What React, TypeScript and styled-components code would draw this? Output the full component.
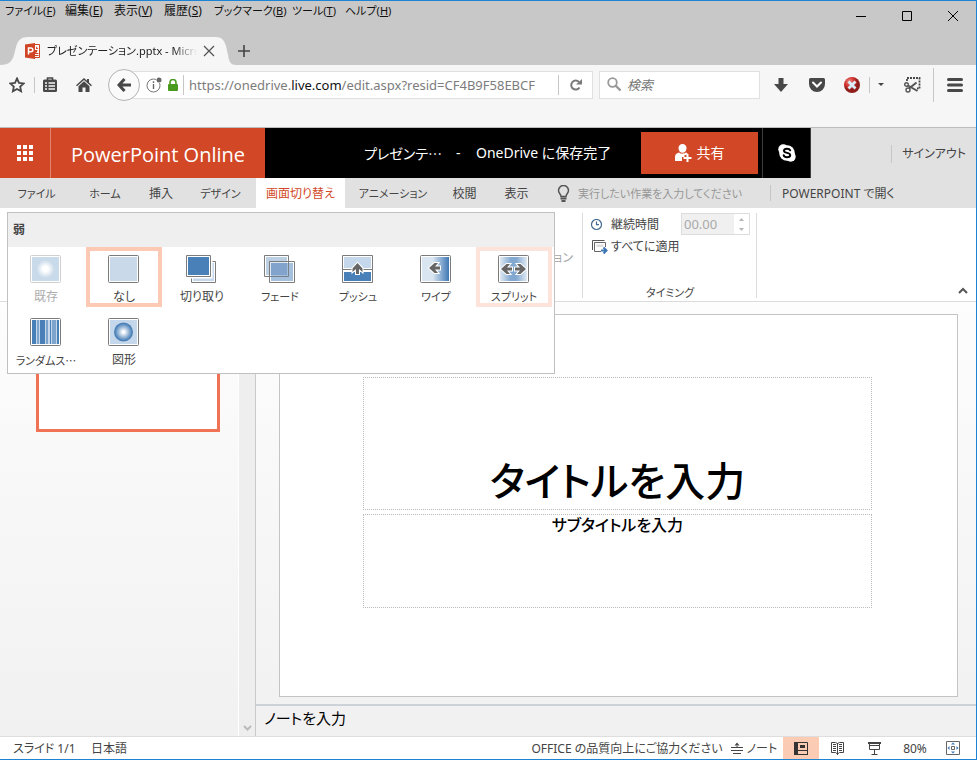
import React from "react";
import styled, { createGlobalStyle } from "styled-components";

const GlobalStyle = createGlobalStyle`
  *, *::before, *::after { box-sizing: border-box; }
  body {
    margin: 0;
    font-family: "Noto Sans", "Noto Sans CJK JP", sans-serif;
    font-feature-settings: "palt";
    font-size: 12px;
    line-height: 16px;
    color: #444;
  }
  button, input {
    font: inherit;
    font-feature-settings: inherit;
    color: inherit;
    margin: 0;
    padding: 0;
    border: 0;
    background: none;
    white-space: nowrap;
  }
  a { color: inherit; text-decoration: none; }
  svg { display: block; flex: none; }
`;

/* ---------- window ---------- */

const Window = styled.div`
  min-height: 100vh;
  display: flex;
  flex-direction: column;
  border: solid #1e83d3;
  border-width: 1px 1px 1px 0;
  background: #fff;
  overflow: hidden;
`;

const TitleArea = styled.header`
  display: flex;
  justify-content: space-between;
  height: 64px;
  background: #c8c8c8;
`;

const TitleLeft = styled.div`
  display: flex;
  flex-direction: column;
  justify-content: space-between;
`;

const MenuBar = styled.nav`
  display: grid;
  grid-template-columns: 60px 49px 50px 50px 78px 53px 60px;
  padding: 2px 0 0 5px;
  color: #111;
`;

const MenuButton = styled.button<{ $kana?: boolean }>`
  text-align: left;
  font-size: ${(p) => (p.$kana ? 11 : 12)}px;
  line-height: 16px;
`;

const TabStrip = styled.div`
  display: flex;
  align-items: center;
  height: 28px;
`;

const BrowserTab = styled.div`
  position: relative;
  display: flex;
  align-items: center;
  width: 236px;
  height: 28px;
  padding-left: 25px;
  color: #222;
`;

const TabShape = styled.svg`
  position: absolute;
  inset: 0;
  z-index: 0;
`;

const TabTitle = styled.span`
  z-index: 1;
  width: 150px;
  margin-left: 6px;
  overflow: hidden;
  font-size: 11px;
  white-space: nowrap;
  mask-image: linear-gradient(90deg, #000 126px, transparent 150px);
`;

const IconButton = styled.button<{ $w?: number; $h?: number }>`
  position: relative;
  display: flex;
  align-items: center;
  justify-content: center;
  flex: none;
  width: ${(p) => p.$w ?? 36}px;
  height: ${(p) => p.$h ?? 28}px;
`;

const WindowButtons = styled.div`
  display: flex;
  height: 30px;
`;

/* ---------- navigation bar ---------- */

const NavBar = styled.div`
  display: flex;
  align-items: center;
  height: 63px;
  padding: 1px 0 24px;
  background: #f6f6f6;
  border-bottom: 1px solid #bdbdbd;
`;

const Rule = styled.span<{ $h?: number }>`
  flex: none;
  width: 1px;
  height: ${(p) => p.$h ?? 16}px;
  background: #c6c6c6;
`;

const BackButton = styled.button`
  display: flex;
  align-items: center;
  justify-content: center;
  flex: none;
  z-index: 1;
  width: 32px;
  height: 32px;
  margin: 0 -16px 0 5px;
  border: 1px solid #b4b4b4;
  border-radius: 50%;
  background: #fafafa;
`;

const AddressBar = styled.div`
  display: flex;
  align-items: center;
  flex: 1;
  min-width: 0;
  height: 28px;
  padding-left: 20px;
  border: 1px solid #e0e0e0;
  background: #fff;
`;

const Url = styled.div`
  flex: 1;
  min-width: 0;
  margin-left: 5px;
  overflow: hidden;
  font-size: 13px;
  line-height: 20px;
  white-space: nowrap;
  color: #7c7c7c;
  b { font-weight: 400; color: #111; }
`;

const SearchBox = styled.label`
  display: flex;
  align-items: center;
  flex: none;
  width: 161px;
  height: 28px;
  margin: 0 3px 0 6px;
  padding-left: 7px;
  gap: 5px;
  border: 1px solid #e0e0e0;
  background: #fff;
  input { width: 100%; font-size: 13px; font-style: italic; outline: 0; }
  input::placeholder { color: #777; opacity: 1; }
`;

/* ---------- app header ---------- */

const AppHeader = styled.div`
  display: flex;
  align-items: stretch;
  height: 50px;
  background: #e1e1e1;
`;

const Launcher = styled.button`
  display: flex;
  align-items: center;
  justify-content: center;
  width: 51px;
  background: #d24726;
  border-right: 1px solid #e28570;
`;

const Brand = styled.a`
  display: flex;
  align-items: center;
  justify-content: center;
  width: 214px;
  padding-top: 3px;
  background: #d24726;
  color: #fff;
  font-family: "Open Sans", sans-serif;
  font-size: 20px;
  line-height: 28px;
  white-space: nowrap;
`;

const DocumentBar = styled.div`
  display: flex;
  align-items: center;
  flex: 0 1 546px;
  background: #000;
  color: #fff;
  font-size: 14px;
  line-height: 20px;
  white-space: nowrap;
`;

const DocumentName = styled.span`
  width: 92px;
  margin-left: 99px;
`;

const Ellipsis = styled.span`
  font-family: "Noto Sans CJK JP", sans-serif;
`;

const Dash = styled.span`
  width: 20px;
`;

const SaveState = styled.span`
  flex: 1;
`;

const ShareButton = styled.button`
  display: flex;
  align-items: center;
  justify-content: center;
  gap: 5px;
  width: 117px;
  height: 42px;
  margin-right: 4px;
  background: #d24726;
  color: #fff;
`;

const SkypeButton = styled.button`
  display: flex;
  align-items: center;
  justify-content: center;
  align-self: stretch;
  width: 49px;
  border: solid #3c3c3c;
  border-width: 0 1px;
`;

const Account = styled.div`
  display: flex;
  align-items: center;
  justify-content: flex-end;
  flex: 1;
  gap: 10px;
  padding: 2px 10px 0 0;
  white-space: nowrap;
`;

/* ---------- ribbon ---------- */

const RibbonTabs = styled.div`
  display: flex;
  align-items: center;
  height: 30px;
  background: #e1e1e1;
  white-space: nowrap;
`;

const TabList = styled.div`
  display: grid;
  grid-template-columns: 73px 64px 48px 71px 89px 96px 47px 57px;
  height: 30px;
`;

const RibbonTab = styled.button<{ $active?: boolean; $kana?: boolean }>`
  padding-top: 2px;
  background: ${(p) => (p.$active ? "#fff" : "transparent")};
  color: ${(p) => (p.$active ? "#d24726" : "#444")};
  font-size: ${(p) => (p.$kana ? 11 : 12)}px;
`;

const TellMe = styled.label`
  display: flex;
  align-items: center;
  gap: 8px;
  width: 225px;
  padding-left: 12px;
  font-size: 11px;
  input { flex: 1; min-width: 0; padding-top: 2px; outline: 0; }
  input::placeholder { color: #979797; opacity: 1; }
`;

const OpenLink = styled.a`
  padding-top: 2px;
  margin-left: 11px;
`;

const Ribbon = styled.div`
  position: relative;
  display: flex;
  height: 94px;
  padding-top: 5px;
  border-bottom: 1px solid #dcdcdc;
  background: #fff;
`;

const EffectGroup = styled.div`
  display: flex;
  align-items: center;
  justify-content: flex-end;
  width: 583px;
  height: 85px;
  padding: 4px 9px 0 0;
  border-right: 1px solid #dcdcdc;
  color: #a6a6a6;
`;

const TimingGroup = styled.div`
  display: flex;
  flex-direction: column;
  width: 174px;
  height: 85px;
  padding: 0 6px 0 7px;
  border-right: 1px solid #dcdcdc;
`;

const TimingRow = styled.div`
  display: flex;
  align-items: center;
  height: 22px;
`;

const TimingLabel = styled.label`
  display: flex;
  align-items: center;
  gap: 8px;
  flex: 1;
  padding-top: 2px;
  white-space: nowrap;
`;

const Spinner = styled.div`
  display: flex;
  width: 69px;
  height: 22px;
  border: 1px solid #dcdcdc;
  input {
    flex: 1;
    min-width: 0;
    padding-left: 2px;
    background: #f0f0f0;
    color: #a9a9a9;
    font-size: 13px;
  }
`;

const SpinArrows = styled.div`
  display: flex;
  flex-direction: column;
  width: 15px;
`;

const ApplyAll = styled.button`
  display: flex;
  align-items: center;
  gap: 3px;
  height: 22px;
  padding: 2px 0 0 2px;
`;

const GroupName = styled.div`
  margin-top: auto;
  text-align: center;
  font-size: 11px;
  line-height: 10px;
`;

const Collapse = styled.button`
  align-self: flex-end;
  margin: 0 8px 7px auto;
`;

/* ---------- transition gallery ---------- */

const Gallery = styled.section`
  position: absolute;
  z-index: 5;
  top: 4px;
  left: 7px;
  width: 548px;
  height: 162px;
  border: 1px solid #c0c0c0;
  background: #fff;
`;

const GalleryTitle = styled.h2`
  margin: 0;
  padding: 0 5px;
  background: #efefef;
  font-size: 12px;
  line-height: 34px;
`;

const GalleryGrid = styled.div`
  display: grid;
  grid-template-columns: repeat(7, 76px);
  gap: 3px 2px;
`;

const Effect = styled.button<{ $mark?: string; $off?: boolean; $kana?: boolean }>`
  display: flex;
  flex-direction: column;
  align-items: center;
  gap: 6px;
  height: 60px;
  padding-top: 4px;
  border: 4px solid ${(p) => p.$mark ?? "transparent"};
  color: ${(p) => (p.$off ? "#adadad" : "#444")};
  font-size: ${(p) => (p.$kana ? 11 : 12)}px;
  line-height: 16px;
`;

/* ---------- workspace ---------- */

const Workspace = styled.main`
  display: flex;
  flex: 1;
  min-height: 434px;
  background: linear-gradient(#fdfdfd, #f1f1f1);
`;

const SlidePanel = styled.aside`
  display: flex;
  justify-content: space-between;
  width: 256px;
  padding-left: 36px;
  border-right: 1px solid #c9c9c9;
`;

const Thumbnail = styled.button`
  width: 184px;
  height: 106px;
  margin-top: 24px;
  border: 3px solid #f07355;
  background: #fff;
`;

const PanelScroll = styled.div`
  display: flex;
  align-items: flex-end;
  justify-content: center;
  width: 17px;
  padding-bottom: 4px;
  border-left: 1px solid #fff;
  background: #eee;
`;

const Stage = styled.div`
  display: flex;
  flex-direction: column;
  flex: 1;
  min-width: 0;
`;

const Slide = styled.article`
  display: flex;
  flex-direction: column;
  flex: 1;
  gap: 4px;
  margin: 12px 18px 7px 23px;
  padding: 62px 85px 88px 83px;
  border: 1px solid #c4c4c4;
  background: #fff;
  color: #000;
  text-align: center;
`;

const TitleBox = styled.div`
  display: flex;
  align-items: flex-end;
  justify-content: center;
  flex: 132;
  padding-bottom: 5px;
  border: 1px dotted #bcbcbc;
  font-size: 40px;
  font-weight: 500;
  line-height: 46px;
`;

const SubtitleBox = styled.div`
  flex: 96;
  border: 1px dotted #bcbcbc;
  font-size: 16px;
  font-weight: 500;
  line-height: 20px;
`;

const Notes = styled.div`
  height: 32px;
  padding: 2px 8px;
  border-top: 2px solid #ccd2d7;
  background: #f1f1f1;
  color: #000;
  font-size: 15px;
  line-height: 20px;
`;

/* ---------- status bar ---------- */

const StatusBar = styled.footer`
  display: flex;
  align-items: stretch;
  justify-content: space-between;
  height: 23px;
  padding: 0 7px 0 13px;
  border-top: 1px solid #dedede;
  background: #fff;
  line-height: 22px;
  white-space: nowrap;
`;

const StatusSide = styled.div`
  display: flex;
  align-items: center;
`;

const StatusText = styled.span<{ $w: number }>`
  width: ${(p) => p.$w}px;
  padding-top: 2px;
`;

const StatusButton = styled.button<{ $w: number; $active?: boolean }>`
  display: flex;
  align-items: center;
  justify-content: center;
  gap: 4px;
  width: ${(p) => p.$w}px;
  height: 22px;
  background: ${(p) => (p.$active ? "#fbcbb4" : "transparent")};
`;

const StatusLabel = styled.span`
  padding-top: 2px;
`;

/* ---------- drawings ---------- */

const Svg = (p: { w: number; h: number; children: React.ReactNode }) => (
  <svg width={p.w} height={p.h} viewBox={`0 0 ${p.w} ${p.h}`} fill="none" aria-hidden="true">
    {p.children}
  </svg>
);

const PptLogo = styled.svg`
  z-index: 1;
`;

const Frame = ({ light = false }) => (
  <rect x="0.5" y="0.5" width="30" height="27" rx="1" fill="#fff" stroke={light ? "#d0d0d0" : "#7b7b7b"} />
);

const LeftArrow = () => (
  <path
    d="M0 5 5.500 0H9L6 3.500h5v3H6L9 10H5.500z"
    fill="#666"
    stroke="#fff"
    strokeWidth="2"
    paintOrder="stroke"
  />
);

const effectArt: Record<string, React.ReactNode> = {
  current: (
    <>
      <Frame light />
      <rect x="2" y="2" width="27" height="24" fill="#c9daea" />
      <circle cx="15.500" cy="14" r="9" fill="url(#glow)" />
    </>
  ),
  none: (
    <>
      <Frame />
      <rect x="2" y="2" width="27" height="24" fill="#c9d9ea" />
    </>
  ),
  cut: (
    <>
      <path d="M5.500 6.500h24v21h-24z" fill="#fff" stroke="#7b7b7b" />
      <path d="M7 8h21v18H7z" fill="#c5d7ea" />
      <path d="M-.5-.5h27v24h-27z" fill="#fff" />
      <path d="M.5.5h24v21H.5z" fill="#fff" stroke="#7b7b7b" />
      <path d="M2 2h21v18H2z" fill="#4a80b8" />
    </>
  ),
  fade: (
    <>
      <path d="M.5.5h24v21H.5z" fill="#fff" stroke="#7b7b7b" />
      <path d="M2 2h21v18H2z" fill="#bdd0e3" />
      <path d="M5.500 6.500h25v21h-25z" fill="#fff" fillOpacity=".5" stroke="#7b7b7b" />
      <path d="M7 8h22v18H7z" fill="#8fb0d5" fillOpacity=".8" />
      <path d="M24.500 6.500v15h-19" stroke="#777f8a" />
      <path d="M7 8h16v12H7z" fill="#81a3cc" />
    </>
  ),
  push: (
    <>
      <path d="M.5.5h30v27H.5z" fill="#fff" stroke="#7b7b7b" />
      <path d="M2 2h27v11H2z" fill="#c5d7ea" />
      <path d="M2 17h27v9H2z" fill="#4a80b8" />
      <path d="M0 14.500h31" stroke="#7b7b7b" />
      <g transform="translate(10.500 8) rotate(90 5 5) translate(0 0)">
        <LeftArrow />
      </g>
    </>
  ),
  wipe: (
    <>
      <Frame />
      <rect x="2" y="2" width="27" height="24" fill="url(#wipe)" />
      <g transform="translate(9 8)">
        <LeftArrow />
      </g>
    </>
  ),
  split: (
    <>
      <Frame />
      <rect x="2" y="2" width="27" height="24" fill="url(#split)" />
      <g transform="translate(3 9)">
        <LeftArrow />
      </g>
      <g transform="translate(28 9) scale(-1 1)">
        <LeftArrow />
      </g>
    </>
  ),
  bars: (
    <>
      <Frame />
      <rect x="2" y="2" width="27" height="24" fill="#c5d7ea" />
      <path d="M2 2h4v24H2zM10 2h5v24h-5zM20 2h1v24h-1zM27 2h2v24h-2z" fill="#4a80b8" />
      <path d="M7 2h2v24H7zM16 2h2v24h-2zM22 2h4v24h-4z" fill="#7ea4cd" />
    </>
  ),
  shape: (
    <>
      <Frame />
      <rect x="2" y="2" width="27" height="24" fill="#c5d7ea" />
      <circle cx="15.500" cy="14" r="9.500" fill="url(#ball)" />
    </>
  ),
};

const GradientStore = styled.svg`
  position: absolute;
`;

const Gradients = () => (
  <GradientStore width="0" height="0" aria-hidden="true">
    <defs>
      <radialGradient id="glow">
        <stop offset=".3" stopColor="#fff" />
        <stop offset="1" stopColor="#c9daea" />
      </radialGradient>
      <radialGradient id="ball">
        <stop offset=".1" stopColor="#fff" />
        <stop offset=".9" stopColor="#4a80b8" />
      </radialGradient>
      <linearGradient id="wipe">
        <stop offset=".4" stopColor="#d9e5f1" />
        <stop offset="1" stopColor="#4078b5" />
      </linearGradient>
      <linearGradient id="split">
        <stop offset="0" stopColor="#e0eaf4" />
        <stop offset=".4" stopColor="#82a8d0" />
        <stop offset=".6" stopColor="#82a8d0" />
        <stop offset="1" stopColor="#e0eaf4" />
      </linearGradient>
      <radialGradient id="stop" cx=".35" cy=".3">
        <stop offset="0" stopColor="#f0938c" />
        <stop offset=".6" stopColor="#d2322d" />
        <stop offset="1" stopColor="#8f1d1a" />
      </radialGradient>
    </defs>
  </GradientStore>
);

/* ---------- data ---------- */

const menus = [
  ["ファイル", "F"],
  ["編集", "E"],
  ["表示", "V"],
  ["履歴", "S"],
  ["ブックマーク", "B"],
  ["ツール", "T"],
  ["ヘルプ", "H"],
];

const ribbonTabs = ["ファイル", "ホーム", "挿入", "デザイン", "画面切り替え", "アニメーション", "校閲", "表示"];

const effects: { label: string; art: string; mark?: string; off?: boolean; cut?: boolean }[] = [
  { label: "既存", art: "current", off: true },
  { label: "なし", art: "none", mark: "#fccab4" },
  { label: "切り取り", art: "cut" },
  { label: "フェード", art: "fade" },
  { label: "プッシュ", art: "push" },
  { label: "ワイプ", art: "wipe" },
  { label: "スプリット", art: "split", mark: "#fde3da" },
  { label: "ランダムス", art: "bars", cut: true },
  { label: "図形", art: "shape" },
];

const isKana = (s: string) => /^[\u30a0-\u30ff]+$/.test(s);

const DARK = "#484848";

export default function App() {
  return (
    <Window>
      <GlobalStyle />
      <Gradients />

      <TitleArea>
        <TitleLeft>
          <MenuBar aria-label="メニュー">
            {menus.map(([name, key]) => (
              <MenuButton key={key} $kana={isKana(name)}>
                {name}(<u>{key}</u>)
              </MenuButton>
            ))}
          </MenuBar>
          <TabStrip>
            <BrowserTab>
              <TabShape width="236" height="28" viewBox="0 0 236 28" aria-hidden="true">
                <path
                  d="M0 28c8 0 12-3 14-10l2-8c2-7 5-10 12-10h187c7 0 9 3 11 9l2 9c1 7 3 10 8 10z"
                  fill="#f6f6f6"
                />
              </TabShape>
              <PptLogo width="16" height="16" viewBox="0 0 16 16" aria-hidden="true">
                <path d="M8 1.500h6.500v13H8z" fill="#fff" stroke="#d04526" />
                <path d="M10 4a3 3 0 1 0 2.500 3H10zM11 3.200V6h2.400" fill="#d04526" />
                <path d="M10 10.500h3.500M10 12.500h3.500" stroke="#d04526" />
                <path d="M0 1.500 10 0v16L0 14.500z" fill="#d04526" />
                <path d="M3.500 11.500V5H6a1.800 1.800 0 0 1 0 3.700H3.500" fill="none" stroke="#fff" strokeWidth="1.500" />
              </PptLogo>
              <TabTitle>プレゼンテーション.pptx - Micros</TabTitle>
              <IconButton $w={24} $h={24} aria-label="タブを閉じる">
                <Svg w={12} h={12}>
                  <path d="m1 1 10 10M11 1 1 11" stroke="#555" strokeWidth="1.300" />
                </Svg>
              </IconButton>
            </BrowserTab>
            <IconButton $w={16} $h={24} aria-label="新しいタブ">
              <Svg w={12} h={12}>
                <path d="M6 0v12M0 6h12" stroke="#444" strokeWidth="1.600" />
              </Svg>
            </IconButton>
          </TabStrip>
        </TitleLeft>
        <WindowButtons>
          <IconButton $w={46} $h={30} aria-label="最小化">
            <Svg w={10} h={10}>
              <path d="M0 5.500h10" stroke="#000" />
            </Svg>
          </IconButton>
          <IconButton $w={46} $h={30} aria-label="最大化">
            <Svg w={10} h={10}>
              <path d="M.5.5h9v9h-9z" stroke="#000" />
            </Svg>
          </IconButton>
          <IconButton $w={46} $h={30} aria-label="閉じる">
            <Svg w={10} h={10}>
              <path d="m0 0 10 10M10 0 0 10" stroke="#000" />
            </Svg>
          </IconButton>
        </WindowButtons>
      </TitleArea>

      <NavBar>
        <IconButton $w={34} aria-label="ブックマークに追加">
          <Svg w={16} h={16}>
            <path d="m8 1.500 2 4.300 4.700.6-3.500 3.200.9 4.700L8 12l-4.100 2.300.9-4.700L1.300 6.400 6 5.800z" stroke={DARK} strokeWidth="1.800" />
          </Svg>
        </IconButton>
        <Rule />
        <IconButton $w={30} aria-label="ブックマーク一覧">
          <Svg w={14} h={16}>
            <path d="M4.500 3.500V1h5v2.500" stroke={DARK} strokeWidth="1.600" />
            <rect y="2.500" width="14" height="12.500" rx="1.500" fill={DARK} />
            <path d="M2 6h2M5.500 6h6.500M2 9h2M5.500 9h6.500M2 12h2M5.500 12h6.500" stroke="#f6f6f6" strokeWidth="1.500" />
          </Svg>
        </IconButton>
        <IconButton $w={38} aria-label="ホーム">
          <Svg w={16} h={14}>
            <path d="M8 0 0 7.300l1 1L8 2l7 6.300 1-1-3-2.800V1h-2v1.700z" fill={DARK} />
            <path d="m8 3.300 5.500 5V14H9.500V9.500h-3V14H2.500V8.300z" fill={DARK} />
          </Svg>
        </IconButton>
        <BackButton aria-label="戻る">
          <Svg w={14} h={14}>
            <path d="M7.500 1 2 7l5.500 6M2 7h12" stroke={DARK} strokeWidth="3" />
          </Svg>
        </BackButton>
        <AddressBar>
          <IconButton $w={17} aria-label="サイト情報">
            <Svg w={16} h={16}>
              <circle cx="7.500" cy="8.500" r="6.500" stroke="#777" />
              <path d="M7.500 7v5M7.500 4.300V6" stroke="#666" strokeWidth="1.400" />
              <circle cx="13" cy="3" r="3.200" fill="#fff" />
              <circle cx="13" cy="3" r="2.500" fill="#666" />
            </Svg>
          </IconButton>
          <IconButton $w={21} aria-label="安全な接続">
            <Svg w={10} h={12}>
              <path d="M2 6V3.500a3 3 0 0 1 6 0V6" stroke="#4a9a20" strokeWidth="1.600" />
              <rect y="5" width="10" height="7" rx="1" fill="#4a9a20" />
            </Svg>
          </IconButton>
          <Rule $h={20} />
          <Url>
            https://onedrive.<b>live.com</b>/edit.aspx?resid=CF4B9F58EBCF
          </Url>
          <Rule $h={20} />
          <IconButton $w={33} aria-label="再読み込み">
            <Svg w={12} h={12}>
              <path d="M9.500 8.500A4.500 4.500 0 1 1 9 3" stroke="#7a7a7a" strokeWidth="2" />
              <path d="M12 0v5.500H6z" fill="#7a7a7a" />
            </Svg>
          </IconButton>
        </AddressBar>
        <SearchBox>
          <Svg w={15} h={15}>
            <circle cx="5.500" cy="5.500" r="4.300" stroke="#999" strokeWidth="1.800" />
            <path d="m8.500 8.500 5 5" stroke="#999" strokeWidth="2.400" />
          </Svg>
          <input placeholder="検索" aria-label="検索" />
        </SearchBox>
        <IconButton aria-label="ダウンロード">
          <Svg w={14} h={14}>
            <path d="M4.500 0h5v6H14l-7 8-7-8h4.500z" fill={DARK} />
          </Svg>
        </IconButton>
        <IconButton aria-label="Pocket">
          <Svg w={16} h={14}>
            <path d="M1.500 0h13A1.500 1.500 0 0 1 16 1.500V6A8 8 0 0 1 0 6V1.500A1.500 1.500 0 0 1 1.500 0z" fill={DARK} />
            <path d="m4 4.500 4 4 4-4" stroke="#fff" strokeWidth="2" strokeLinecap="round" />
          </Svg>
        </IconButton>
        <IconButton $w={34} aria-label="停止">
          <Svg w={16} h={16}>
            <circle cx="8" cy="8" r="8" fill="url(#stop)" />
            <path d="m4.500 4.500 7 7M11.500 4.500l-7 7" stroke="#d9eef8" strokeWidth="2.800" />
          </Svg>
        </IconButton>
        <Rule />
        <IconButton $w={21} aria-label="その他">
          <Svg w={6} h={3}>
            <path d="M0 0h6L3 3z" fill={DARK} />
          </Svg>
        </IconButton>
        <IconButton $w={42} aria-label="切り抜き">
          <Svg w={17} h={16}>
            <path d="M3 4V1h12.500v10.500H13" stroke={DARK} strokeWidth="1.800" strokeDasharray="2 1" />
            <circle cx="2.500" cy="7.500" r="1.800" stroke="#555" strokeWidth="1.400" />
            <circle cx="4" cy="13" r="2" stroke="#555" strokeWidth="1.400" />
            <path d="m4 8.500 9.500 5.500M5 11.500 12.500 5.500" stroke="#555" strokeWidth="2" />
          </Svg>
        </IconButton>
        <Rule $h={34} />
        <IconButton $w={42} aria-label="メニューを開く">
          <Svg w={16} h={14}>
            <path d="M1.500 1.500h13M1.500 7h13M1.500 12.500h13" stroke={DARK} strokeWidth="3" strokeLinecap="round" />
          </Svg>
        </IconButton>
      </NavBar>

      <AppHeader>
        <Launcher aria-label="アプリ起動ツール">
          <Svg w={16} h={16}>
            <path
              d="M0 0h4v4H0zM6 0h4v4H6zM12 0h4v4h-4zM0 6h4v4H0zM6 6h4v4H6zM12 6h4v4h-4zM0 12h4v4H0zM6 12h4v4H6zM12 12h4v4h-4z"
              fill="#fff"
            />
          </Svg>
        </Launcher>
        <Brand href="#">PowerPoint Online</Brand>
        <DocumentBar>
          <DocumentName>
            プレゼンテ<Ellipsis>…</Ellipsis>
          </DocumentName>
          <Dash>-</Dash>
          <SaveState>OneDrive に保存完了</SaveState>
          <ShareButton>
            <Svg w={17} h={18}>
              <path d="M7.500 0a4 4 0 0 1 4 4.200c0 2.500-1.700 4.600-4 4.600s-4-2.100-4-4.600a4 4 0 0 1 4-4.200z" fill="#fff" />
              <path d="M4 8.500c1.500 1.600 5 1.600 7 0l1.500.8v1.700H9.500v2H7v4H0v-4c0-2.500 1.500-3.800 4-4.500z" fill="#fff" />
              <path d="M12.500 10v8M8.500 14h8" stroke="#fff" strokeWidth="2" />
            </Svg>
            共有
          </ShareButton>
          <SkypeButton aria-label="Skype">
            <Svg w={18} h={18}>
              <circle cx="9" cy="9" r="7.800" fill="#fff" />
              <circle cx="5.300" cy="5.300" r="5" fill="#fff" />
              <circle cx="12.700" cy="12.700" r="5" fill="#fff" />
              <path
                d="M12.200 6.300C11.700 5 10.500 4.700 9 4.700c-1.800 0-3 .7-3 2 0 3 6.200 1.300 6.200 4.400 0 1.500-1.500 2.200-3.200 2.200S6.100 12.700 5.700 11.300"
                stroke="#000"
                strokeWidth="2"
                strokeLinecap="round"
              />
            </Svg>
          </SkypeButton>
        </DocumentBar>
        <Account>
          <Rule $h={18} />
          <a href="#">サインアウト</a>
        </Account>
      </AppHeader>

      <RibbonTabs>
        <TabList role="tablist">
          {ribbonTabs.map((t) => (
            <RibbonTab
              key={t}
              role="tab"
              aria-selected={t === "画面切り替え"}
              $active={t === "画面切り替え"}
              $kana={isKana(t)}
            >
              {t}
            </RibbonTab>
          ))}
        </TabList>
        <TellMe>
          <Svg w={13} h={17}>
            <path d="M4 11.500C4 9 1.500 8.500 1.500 5.500a5 5 0 0 1 10 0c0 3-2.500 3.500-2.500 6z" stroke="#555" strokeWidth="1.500" />
            <path d="M3.500 13.500h6M4.500 16h4" stroke="#555" strokeWidth="1.800" />
          </Svg>
          <input placeholder="実行したい作業を入力してください" aria-label="実行したい作業" />
        </TellMe>
        <Rule />
        <OpenLink href="#">POWERPOINT で開く</OpenLink>
      </RibbonTabs>

      <Ribbon>
        <EffectGroup>ション</EffectGroup>
        <TimingGroup>
          <TimingRow>
            <TimingLabel htmlFor="duration">
              <Svg w={13} h={13}>
                <circle cx="6.500" cy="5.500" r="5" stroke="#44698f" strokeWidth="1.200" />
                <path d="M6.500 2.500v3.200H9" stroke="#44698f" strokeWidth="1.200" />
              </Svg>
              継続時間
            </TimingLabel>
            <Spinner>
              <input id="duration" defaultValue="00.00" disabled />
              <SpinArrows>
                <IconButton $w={15} $h={10} aria-label="増やす">
                  <Svg w={5} h={3}>
                    <path d="M0 3h5L2.500 0z" fill="#b5b5b5" />
                  </Svg>
                </IconButton>
                <IconButton $w={15} $h={10} aria-label="減らす">
                  <Svg w={5} h={3}>
                    <path d="M0 0h5L2.500 3z" fill="#b5b5b5" />
                  </Svg>
                </IconButton>
              </SpinArrows>
            </Spinner>
          </TimingRow>
          <ApplyAll>
            <Svg w={16} h={14}>
              <path d="M.5 10V.5h12" stroke="#555" />
              <path d="M9 11.500H2.500v-9h11V7" stroke="#666" />
              <path d="M4.500 4.500h7V7h-7z" fill="#ddd" />
              <path d="M9 10.500h5M11.500 7.500l3 3-3 3" stroke="#3c76b5" strokeWidth="2" />
            </Svg>
            すべてに適用
          </ApplyAll>
          <GroupName>タイミング</GroupName>
        </TimingGroup>
        <Collapse aria-label="リボンを折りたたむ">
          <Svg w={10} h={7}>
            <path d="m1 6 4-4 4 4" stroke="#555" strokeWidth="2" />
          </Svg>
        </Collapse>

        <Gallery aria-label="画面切り替え">
          <GalleryTitle>弱</GalleryTitle>
          <GalleryGrid>
            {effects.map((e) => (
              <Effect key={e.label} $mark={e.mark} $off={e.off} $kana={isKana(e.label)} disabled={e.off}>
                <Svg w={32} h={28}>
                  {effectArt[e.art]}
                </Svg>
                <span>
                  {e.label}
                  {e.cut && <Ellipsis>…</Ellipsis>}
                </span>
              </Effect>
            ))}
          </GalleryGrid>
        </Gallery>
      </Ribbon>

      <Workspace>
        <SlidePanel>
          <Thumbnail aria-label="スライド 1" />
          <PanelScroll>
            <Svg w={9} h={7}>
              <path d="m1 1 3.500 3.500L8 1" stroke="#bbb" strokeWidth="2" />
            </Svg>
          </PanelScroll>
        </SlidePanel>
        <Stage>
          <Slide>
            <TitleBox>タイトルを入力</TitleBox>
            <SubtitleBox>サブタイトルを入力</SubtitleBox>
          </Slide>
          <Notes>ノートを入力</Notes>
        </Stage>
      </Workspace>

      <StatusBar>
        <StatusSide>
          <StatusText $w={78}>スライド 1/1</StatusText>
          <StatusText $w={40}>日本語</StatusText>
        </StatusSide>
        <StatusSide>
          <StatusButton $w={196}>
            <StatusLabel>OFFICE の品質向上にご協力ください</StatusLabel>
          </StatusButton>
          <StatusButton $w={58}>
            <Svg w={12} h={12}>
              <path d="M0 5.500h12M0 8.500h12M2 11.500h8" stroke="#444" />
              <path d="M3.500 3.500h5L6 .5zM5.500 3h1v3h-1z" fill="#444" />
            </Svg>
            <StatusLabel>ノート</StatusLabel>
          </StatusButton>
          <StatusButton $w={36} $active aria-label="編集表示">
            <Svg w={14} h={13}>
              <path d="M.5.5h13v12H.5zM4 8.500h10" stroke="#333" />
              <path d="M0 0h4v13H0zM0 12h14v1H0zM6 3h5v3H6z" fill="#333" />
            </Svg>
          </StatusButton>
          <StatusButton $w={37} aria-label="閲覧表示">
            <Svg w={13} h={13}>
              <path
                d="M.5.5h4l2 1 2-1h4v10h-4l-2 1.500-2-1.500h-4zM6.500 1v12M2 2.500h3M2 4.500h3M2 6.500h3M2 8.500h3M8 2.500h3M8 4.500h3M8 6.500h3M8 8.500h3"
                stroke="#444"
              />
            </Svg>
          </StatusButton>
          <StatusButton $w={37} aria-label="スライド ショー">
            <Svg w={13} h={13}>
              <path d="M0 1h13" stroke="#444" strokeWidth="2" />
              <path d="M1.500 2v5.500h10V2M6.500 8v4M3.500 12.500h6M2 3.500h9" stroke="#444" />
            </Svg>
          </StatusButton>
          <StatusButton $w={44}>
            <StatusLabel>80%</StatusLabel>
          </StatusButton>
          <StatusButton $w={32} aria-label="ウィンドウに合わせる">
            <Svg w={14} h={14}>
              <path d="M.5.5h13v13H.5z" stroke="#666" />
              <path d="M5.500 5.500h3v3h-3z" stroke="#666" />
              <path d="m7 1.500 2 2H5zM7 12.500l2-2H5zM1.500 7l2-2v4zM12.500 7l-2-2v4z" fill="#3c76b5" />
            </Svg>
          </StatusButton>
        </StatusSide>
      </StatusBar>
    </Window>
  );
}
